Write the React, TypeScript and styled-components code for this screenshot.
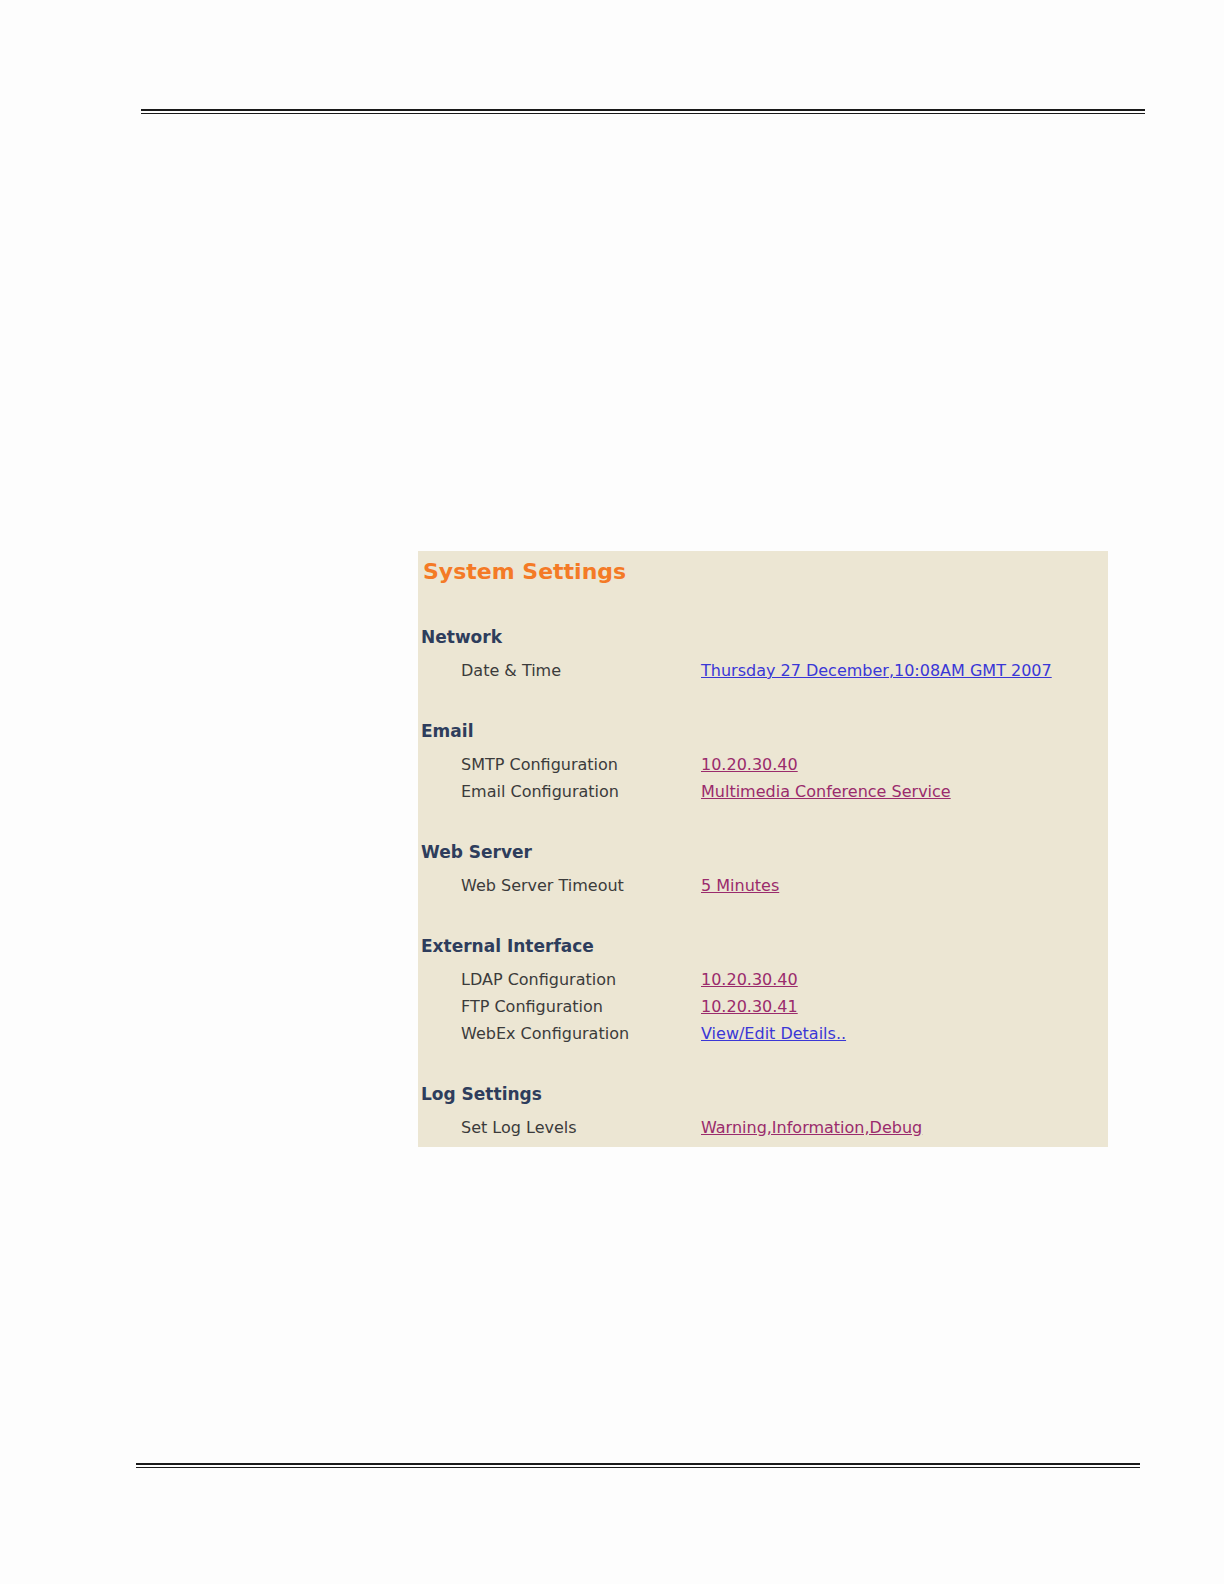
import React from 'react';
import styled, { createGlobalStyle } from 'styled-components';

const GlobalStyle = createGlobalStyle`
  html, body {
    margin: 0;
    padding: 0;
    background: #fdfdfd;
  }
`;

type Row = { label: string; value: string; visited?: boolean };
type Group = { title: string; rows: Row[] };

const groups: Group[] = [
  {
    title: 'Network',
    rows: [{ label: 'Date & Time', value: 'Thursday 27 December,10:08AM GMT 2007' }],
  },
  {
    title: 'Email',
    rows: [
      { label: 'SMTP Configuration', value: '10.20.30.40', visited: true },
      { label: 'Email Configuration', value: 'Multimedia Conference Service', visited: true },
    ],
  },
  {
    title: 'Web Server',
    rows: [{ label: 'Web Server Timeout', value: '5 Minutes', visited: true }],
  },
  {
    title: 'External Interface',
    rows: [
      { label: 'LDAP Configuration', value: '10.20.30.40', visited: true },
      { label: 'FTP Configuration', value: '10.20.30.41', visited: true },
      { label: 'WebEx Configuration', value: 'View/Edit Details..' },
    ],
  },
  {
    title: 'Log Settings',
    rows: [{ label: 'Set Log Levels', value: 'Warning,Information,Debug', visited: true }],
  },
];

export default function App() {
  return (
    <Page>
      <GlobalStyle />
      <DoubleRule $left={141} $width={1004} />
      <Panel>
        <PanelTitle>System Settings</PanelTitle>
        {groups.map((group) => (
          <Section key={group.title}>
            <SectionHeading>{group.title}</SectionHeading>
            <Rows>
              {group.rows.map((row) => (
                <SettingRow key={row.label}>
                  <Label>{row.label}</Label>
                  <Value href="#" $visited={row.visited}>
                    {row.value}
                  </Value>
                </SettingRow>
              ))}
            </Rows>
          </Section>
        ))}
      </Panel>
      <Footer>
        <DoubleRule $left={136} $width={1004} />
      </Footer>
    </Page>
  );
}

const Page = styled.div`
  width: 1224px;
  height: 1584px;
  padding-top: 109px;
  box-sizing: border-box;
  display: flex;
  flex-direction: column;
`;

const DoubleRule = styled.div<{ $left: number; $width: number }>`
  margin-left: ${({ $left }) => $left}px;
  width: ${({ $width }) => $width}px;
  height: 2px;
  border-top: 2px solid #1a1a1a;
  border-bottom: 1px solid #1a1a1a;
`;

const Panel = styled.section`
  margin: 437px 0 0 418px;
  width: 690px;
  background: #ece6d3;
  padding: 1px 0 6px 3px;
  box-sizing: border-box;
`;

const PanelTitle = styled.h1`
  margin: 0 0 0 2px;
  height: 40px;
  line-height: 40px;
  font-family: 'DejaVu Sans', Verdana, sans-serif;
  font-weight: bold;
  font-size: 22px;
  color: #f47a26;
`;

const Section = styled.div`
  padding-top: 30px;

  & + & {
    padding-top: 32px;
  }
`;

const SectionHeading = styled.h2`
  margin: 0;
  height: 30px;
  line-height: 30px;
  font-family: 'DejaVu Sans', Verdana, sans-serif;
  font-weight: bold;
  font-size: 17px;
  color: #2e3d5c;
`;

const Rows = styled.div`
  padding-top: 5px;
  display: flex;
  flex-direction: column;
`;

const SettingRow = styled.div`
  display: grid;
  grid-template-columns: 240px 1fr;
  padding-left: 40px;
  height: 27px;
  align-items: center;
  font-family: 'DejaVu Sans', Verdana, sans-serif;
  font-size: 16px;
`;

const Label = styled.span`
  color: #3b3b3b;
`;

const Value = styled.a<{ $visited?: boolean }>`
  color: ${({ $visited }) => ($visited ? '#9a2b6c' : '#3a37d6')};
  text-decoration: underline;
  white-space: nowrap;
`;

const Footer = styled.footer`
  margin-top: auto;
  padding-bottom: 116px;
`;
